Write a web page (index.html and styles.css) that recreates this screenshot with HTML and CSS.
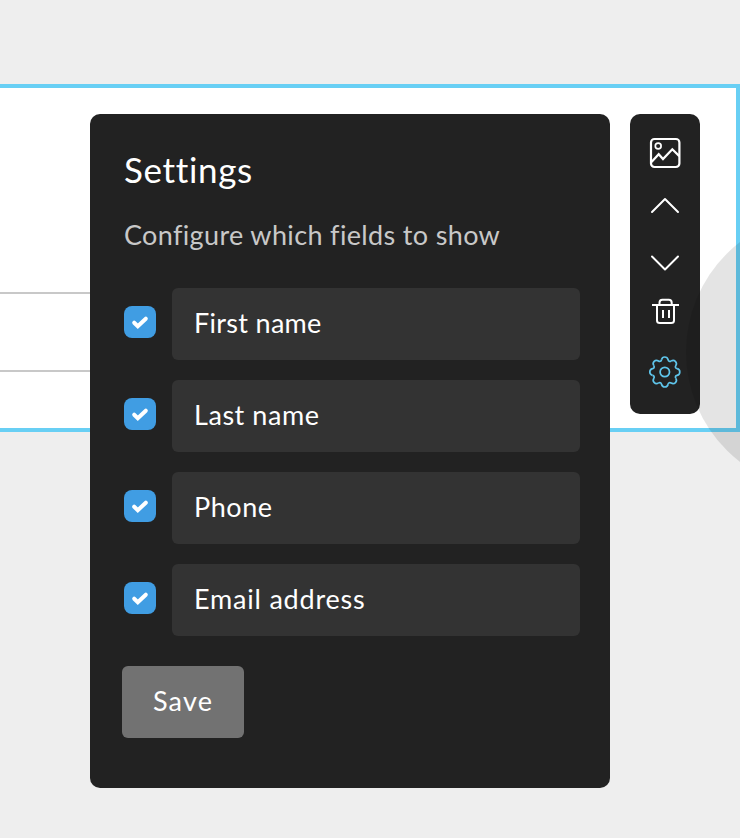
FILE: index.html
```html
<!DOCTYPE html>
<html lang="en">
<head>
<meta charset="utf-8">
<title>Settings</title>
<link rel="stylesheet" href="styles.css">
</head>
<body>
<main class="page">
  <section class="block">
    <div class="line"></div>
    <div class="line"></div>
  </section>
  <div class="overlay">
    <form class="panel">
      <h1 class="title">Settings</h1>
      <p class="intro">Configure which fields to show</p>
      <div class="fields">
        <div class="row"><span class="check"><svg viewBox="0 0 32 32"><path d="M10.200 16.700l3.600 3.500 8-7.500"/></svg></span><div class="field first">First name</div></div>
        <div class="row"><span class="check"><svg viewBox="0 0 32 32"><path d="M10.200 16.700l3.600 3.500 8-7.500"/></svg></span><div class="field last">Last name</div></div>
        <div class="row"><span class="check"><svg viewBox="0 0 32 32"><path d="M10.200 16.700l3.600 3.500 8-7.500"/></svg></span><div class="field phone">Phone</div></div>
        <div class="row"><span class="check"><svg viewBox="0 0 32 32"><path d="M10.200 16.700l3.600 3.500 8-7.500"/></svg></span><div class="field email">Email address</div></div>
      </div>
      <button class="save" type="button">Save</button>
    </form>
    <nav class="toolbar">
      <svg class="tools" viewBox="0 0 70 300">
        <g class="icon">
          <rect x="21" y="25" width="28.400" height="28" rx="3.500" stroke-width="2.200"/>
          <circle cx="28.200" cy="32" r="2.900" stroke-width="1.700"/>
          <path d="M21.500 48l7.200-7.800 4.300 4.900 9.300-9.800 7 6.800" stroke-width="2.200"/>
        </g>
        <g class="icon round">
          <path d="M22 98l13-13 13 13"/>
          <path d="M22 142.500l13 13 13-13"/>
        </g>
        <g class="icon">
          <path d="M22 191h27M29.500 190.500v-1.800q0-2.900 2.900-2.900h6.400q2.900 0 2.900 2.900v1.800M27 191v15.500q0 2.600 2.900 2.600h11.200q2.900 0 2.900-2.600V191M33 196v8M39 196v8"/>
        </g>
        <g class="gear" transform="translate(34.800 258)">
          <circle r="4.700"/>
          <g id="tooth"><path d="M-3.300-12.300C-2.800-14.400-1.500-15-.1-15S2.800-14.400 3.300-12.300C3.650-10.800 4.860-10.080 6.360-11.030"/></g>
          <use href="#tooth" transform="rotate(45)"/>
          <use href="#tooth" transform="rotate(90)"/>
          <use href="#tooth" transform="rotate(135)"/>
          <use href="#tooth" transform="rotate(180)"/>
          <use href="#tooth" transform="rotate(225)"/>
          <use href="#tooth" transform="rotate(270)"/>
          <use href="#tooth" transform="rotate(315)"/>
        </g>
      </svg>
    </nav>
  </div>
  <div class="halo"></div>
</main>
</body>
</html>
```
FILE: styles.css
```css
* { box-sizing: border-box; }
body {
  margin: 0;
  background: #eee;
  font-family: Lato, "Open Sans", sans-serif;
}
.page {
  position: relative;
  height: 838px;
  padding-top: 84px;
  overflow: hidden;
}
.block {
  height: 348px;
  padding-top: 204px;
  border: 4px solid #68cff4;
  border-left: 0;
  background: #fff;
}
.line {
  width: 100px;
  height: 2px;
  margin-bottom: 76px;
  background: #c8c8c8;
}
.overlay {
  position: absolute;
  top: 114px;
  left: 90px;
  display: flex;
  align-items: flex-start;
  gap: 20px;
}
.panel {
  width: 520px;
  height: 674px;
  padding: 33px 30px 0 34px;
  border-radius: 10px;
  background: #222;
}
.title {
  margin: 0;
  color: #fff;
  font-size: 35px;
  font-weight: 400;
  line-height: 44px;
  letter-spacing: .65px;
}
.intro {
  margin: 27px 0 0;
  color: #c8c8c8;
  font-size: 27px;
  line-height: 34px;
  letter-spacing: .35px;
  white-space: nowrap;
}
.fields {
  display: grid;
  gap: 20px;
  margin-top: 36px;
}
.row {
  display: flex;
  gap: 16px;
}
.check {
  width: 32px;
  height: 32px;
  margin-top: 18px;
  border-radius: 8px;
  background: #409de3;
}
.check svg { display: block; }
.check path {
  fill: none;
  stroke: #fff;
  stroke-width: 4;
  stroke-linecap: round;
}
.field {
  flex: 1;
  height: 72px;
  padding-left: 22px;
  border-radius: 6px;
  background: #333;
  color: #fff;
  font-size: 27px;
  line-height: 69px;
  letter-spacing: .3px;
}
.last { letter-spacing: .55px; }
.phone { letter-spacing: .55px; }
.email { letter-spacing: .8px; }
.save {
  display: block;
  width: 122px;
  height: 72px;
  margin: 30px 0 0 -2px;
  padding: 0 0 4px;
  border: 0;
  border-radius: 6px;
  background: #727272;
  color: #fff;
  font: 400 27px Lato, sans-serif;
  letter-spacing: 1.2px;
}
.toolbar {
  width: 70px;
  height: 300px;
  border-radius: 10px;
  background: #222;
}
.tools {
  display: block;
  width: 70px;
  height: 300px;
  fill: none;
}
.icon { stroke: #fff; stroke-width: 2; }
.round { stroke-linecap: round; stroke-linejoin: round; }
.gear { stroke: #5fc5eb; stroke-width: 1.700; }
.halo {
  position: absolute;
  top: 213px;
  left: 686px;
  width: 278px;
  height: 278px;
  border-radius: 50%;
  background: rgba(0, 0, 0, .105);
}
```
